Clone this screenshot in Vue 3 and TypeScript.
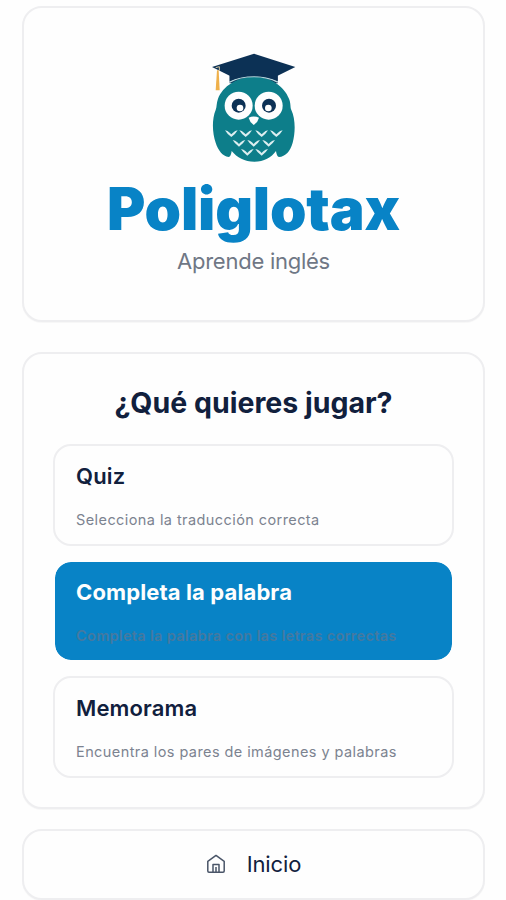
<script setup lang="ts">
import { ref } from 'vue'

interface Game {
  id: string
  title: string
  description: string
}

const games: Game[] = [
  { id: 'quiz', title: 'Quiz', description: 'Selecciona la traducción correcta' },
  { id: 'complete', title: 'Completa la palabra', description: 'Completa la palabra con las letras correctas' },
  { id: 'memory', title: 'Memorama', description: 'Encuentra los pares de imágenes y palabras' },
]

const selected = ref('complete')

const feathers: [number, number][] = [
  [124, 280], [167, 280], [215, 280], [259, 280],
  [147, 309], [191, 309], [236, 309],
  [172, 336], [215, 336],
]
</script>

<template>
  <main class="screen">
    <header class="card hero">
      <svg class="owl" viewBox="0 0 390 390" aria-hidden="true">
        <path class="navy" d="M119 96h144v34H119z" />
        <path
          class="teal"
          d="M191 110C142 110 98 139 84 176C79 190 81 199 77 210C65 239 67 279 77 308C84 330 98 349 116 351Q123 350 125 333C141 353 164 365 193 365C222 365 244 353 258 333Q260 350 267 351C286 349 301 334 308 308C317 276 316 235 304 210C300 199 303 190 297 176C282 137 240 110 191 110Z"
        />
        <path class="cap-edge" d="M119 126C160 104 222 104 263 126" />
        <path class="navy" d="M66 81L192 41L316 81L263 107V123C221 104 160 104 119 124V107Z" />
        <path class="cord" d="M77 83L88 80V92" />
        <path class="tassel" d="M81 91H86L89 151H77Z" />
        <circle class="white" cx="146" cy="197" r="42" />
        <circle class="white" cx="236" cy="197" r="42" />
        <circle class="navy" cx="146" cy="197" r="21" />
        <circle class="navy" cx="237" cy="197" r="21" />
        <circle class="white" cx="150" cy="204" r="10" />
        <circle class="white" cx="235" cy="204" r="10" />
        <path class="white" d="M176 233Q191 226 207 233Q204 246 191 255Q179 246 176 233Z" />
        <path
          v-for="([x, y], index) in feathers"
          :key="index"
          class="feather"
          :transform="`translate(${x} ${y})`"
          d="M-19 -9Q-11 -8 -5 -2L0 3L5 -2Q11 -8 19 -9Q13 2 0 11Q-13 2 -19 -9Z"
        />
      </svg>
      <h1>Poliglotax</h1>
      <p>Aprende inglés</p>
    </header>

    <section class="card games">
      <h2>¿Qué quieres jugar?</h2>
      <button
        v-for="game in games"
        :key="game.id"
        type="button"
        class="game"
        :class="{ active: selected === game.id }"
        @click="selected = game.id"
      >
        <strong>{{ game.title }}</strong>
        <span>{{ game.description }}</span>
      </button>
    </section>

    <nav class="card home">
      <svg class="house" viewBox="0 0 20 20" aria-hidden="true">
        <path d="M1.8 7.3L10 1.4L18.2 7.3V17Q18.2 18.2 17 18.2H3Q1.8 18.2 1.8 17ZM7 18V10.4H13V18M10 13V18" />
      </svg>
      <span>Inicio</span>
    </nav>
  </main>
</template>

<style>
body {
  margin: 0;
  background: #fefefe;
}
</style>

<style scoped>
.screen {
  box-sizing: border-box;
  height: 900px;
  padding: 6px 21px 0 22px;
  overflow: hidden;
  font-family: Inter, 'Liberation Sans', sans-serif;
  color: #11203d;
}

.card {
  box-sizing: border-box;
  border: 2px solid #eeeef0;
  border-radius: 20px;
  background: #fefefe;
  box-shadow: 0 1px 1px rgb(0 0 0 / 3%);
}

.hero {
  display: flex;
  flex-direction: column;
  align-items: center;
  height: 316px;
  padding-top: 32px;
}

.owl {
  width: 130px;
  height: 130px;
  margin-left: 2px;
}

.navy {
  fill: #0c3155;
}

.teal {
  fill: #0d7e8a;
}

.white {
  fill: #fefefe;
}

.feather {
  fill: #dceef0;
}

.cap-edge {
  fill: none;
  stroke: #b5d6dc;
  stroke-width: 5;
}

.cord {
  fill: none;
  stroke: #d7c7a2;
  stroke-width: 3;
}

.tassel {
  fill: #efb04a;
}

h1,
h2,
p {
  margin: 0;
}

h1 {
  margin-top: 3px;
  font-size: 58.5px;
  font-weight: 900;
  line-height: 72px;
  letter-spacing: -0.2px;
  color: #0883c6;
}

.hero p {
  margin-top: 1px;
  font-size: 22px;
  line-height: 30px;
  letter-spacing: -0.25px;
  color: #6f7785;
}

.games {
  display: flex;
  flex-direction: column;
  height: 457px;
  margin-top: 30px;
  padding: 29px 29px 0;
}

h2 {
  margin-bottom: 22px;
  font-size: 28.5px;
  font-weight: 700;
  line-height: 39px;
  text-align: center;
}

.game {
  box-sizing: border-box;
  display: flex;
  flex-direction: column;
  align-items: flex-start;
  height: 102px;
  margin-bottom: 14px;
  padding: 14px 21px;
  border: 2px solid #eeeef0;
  border-radius: 18px;
  background: #fefefe;
  font: inherit;
  color: inherit;
}

.game strong {
  font-size: 22px;
  font-weight: 600;
  line-height: 32px;
  letter-spacing: 0.15px;
}

.game span {
  margin-top: 17px;
  font-size: 14.5px;
  line-height: 22px;
  letter-spacing: 0.42px;
  color: #7c8390;
}

.game.active {
  border-color: #fefefe;
  background: #0883c6;
  background-clip: padding-box;
}

.game.active strong {
  font-weight: 700;
  letter-spacing: 0.12px;
  color: #fefefe;
}

.game.active span {
  font-weight: 600;
  letter-spacing: 0.31px;
  color: #4579a0;
}

.home {
  display: flex;
  align-items: center;
  justify-content: center;
  gap: 21px;
  height: 71px;
  margin-top: 20px;
  padding-bottom: 2px;
  font-size: 22px;
  letter-spacing: -0.1px;
}

.house {
  width: 20px;
  height: 20px;
  fill: none;
  stroke: #4a5568;
  stroke-width: 1.5;
  stroke-linejoin: round;
}
</style>
